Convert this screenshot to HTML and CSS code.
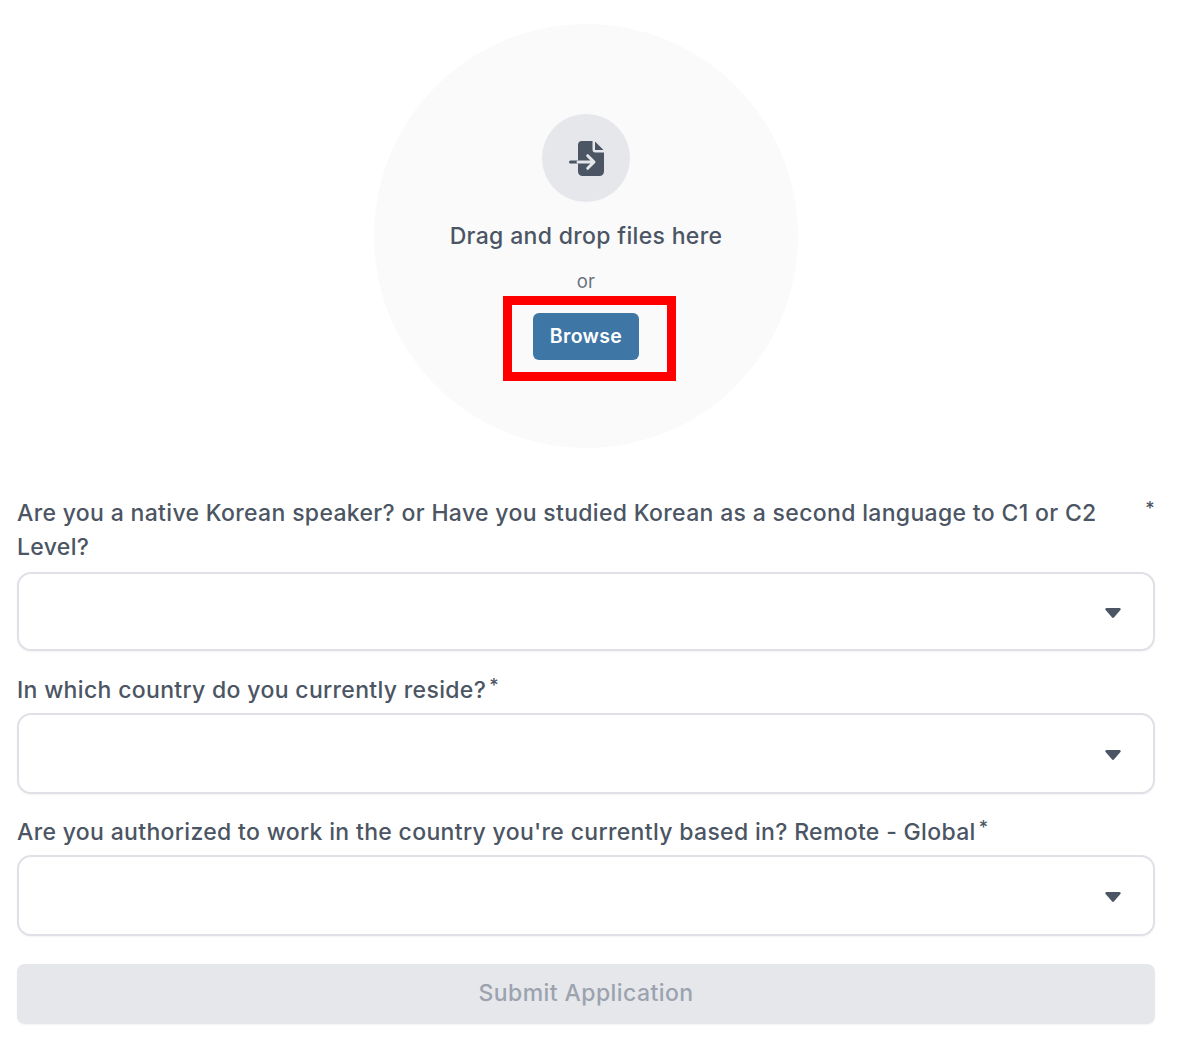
FILE: index.html
```html
<!DOCTYPE html>
<html lang="en">
<head>
<meta charset="utf-8">
<title>Application</title>
<link rel="stylesheet" href="styles.css">
</head>
<body>
<main class="page">
  <section class="drop">
    <div class="drop-icon">
      <svg width="38" height="38" viewBox="0 0 38 38" aria-hidden="true">
        <path class="file" d="M15 2h10.500v8.500a3 3 0 0 0 3 3H37v19a4.500 4.500 0 0 1-4.500 4.500H15.500a4.500 4.500 0 0 1-4.500-4.500V6a4 4 0 0 1 4-4z"/>
        <path class="file" d="M28 2.500l8.500 8.500H28z"/>
        <path class="arrow-out" d="M3.500 23H11"/>
        <path class="arrow-in" d="M11 23h15M20.700 16.700L27 23l-6.300 6.300"/>
      </svg>
    </div>
    <p class="drop-title">Drag and drop files here</p>
    <p class="drop-or">or</p>
    <div class="highlight"><button class="browse" type="button">Browse</button></div>
  </section>
  <form class="fields">
    <div class="field field-first">
      <label class="label"><span class="label-text">Are you a native Korean speaker? or Have you studied Korean as a second language to C1 or C2 Level?</span><span class="star">*</span></label>
      <div class="select select-first"><svg class="caret" width="16" height="10" viewBox="0 0 16 10"><path d="M1.500 0h13a1.200 1.200 0 0 1 .9 2L8.900 9.500a1.200 1.200 0 0 1-1.800 0L.6 2a1.200 1.200 0 0 1 .9-2z"/></svg></div>
    </div>
    <div class="field">
      <label class="label"><span class="label-text">In which country do you currently reside?</span><span class="star">*</span></label>
      <div class="select"><svg class="caret" width="16" height="10" viewBox="0 0 16 10"><path d="M1.500 0h13a1.200 1.200 0 0 1 .9 2L8.900 9.500a1.200 1.200 0 0 1-1.800 0L.6 2a1.200 1.200 0 0 1 .9-2z"/></svg></div>
    </div>
    <div class="field">
      <label class="label"><span class="label-text">Are you authorized to work in the country you're currently based in? Remote - Global</span><span class="star">*</span></label>
      <div class="select"><svg class="caret" width="16" height="10" viewBox="0 0 16 10"><path d="M1.500 0h13a1.200 1.200 0 0 1 .9 2L8.900 9.500a1.200 1.200 0 0 1-1.800 0L.6 2a1.200 1.200 0 0 1 .9-2z"/></svg></div>
    </div>
    <button class="submit" type="button">Submit Application</button>
  </form>
</main>
</body>
</html>
```
FILE: styles.css
```css
* { box-sizing: border-box; }
html, body { margin: 0; background: #fff; }
body { font-family: Inter, "Liberation Sans", sans-serif; color: #4b5563; }
.page { width: 1200px; height: 1058px; padding: 24px 45px 0 17px; }
.drop {
  width: 424px; height: 424px; margin: 0 auto; border-radius: 50%;
  background: #fafafb; display: flex; flex-direction: column; align-items: center;
  padding-top: 90px;
}
.drop-icon {
  width: 88px; height: 88px; border-radius: 50%; background: #e5e7eb;
  display: flex; align-items: center; justify-content: center;
}
.file { fill: #4b5563; }
.arrow-out { stroke: #4b5563; stroke-width: 3; stroke-linecap: round; fill: none; }
.arrow-in { stroke: #e5e7eb; stroke-width: 3; stroke-linecap: round; stroke-linejoin: round; fill: none; }
.drop-title { margin: 20px 0 0; font-size: 23px; line-height: 28px; font-weight: 500; letter-spacing: .33px; }
.drop-or { margin: 19px 0 0; font-size: 18.500px; line-height: 24px; letter-spacing: .33px; color: #6b7280; }
.highlight {
  width: 173px; height: 85px; margin: 3px 0 0 6px; border: 9px solid #fe0000;
  display: flex; justify-content: flex-start; padding: 8px 0 0 21px;
}
.browse {
  width: 106px; height: 47px; padding: 0 0 1px 1px; border: 0; border-radius: 6px;
  background: #3e76a6; color: #fff; font: 600 19.500px Inter, sans-serif; letter-spacing: .33px;
}
.fields { margin-top: 48px; display: flex; flex-direction: column; }
.field { display: flex; flex-direction: column; margin-bottom: 21px; }
.field-first { margin-bottom: 22px; }
.label {
  display: flex; font-size: 23px; line-height: 34px; font-weight: 500;
  letter-spacing: .33px; margin-bottom: 6px;
}
.field-first .label { margin-bottom: 8px; }
.label-text { display: block; }
.star { font-size: 18px; line-height: 25px; margin-left: 3px; }
.select {
  height: 81px; border: 2px solid #dfe1e7; border-radius: 14px; background: #fff;
  display: flex; align-items: center; justify-content: flex-end; padding: 3px 32px 0 0;
  box-shadow: 0 1px 2px rgba(0, 0, 0, .05);
}
.select-first { height: 79px; }
.caret { fill: #4b5563; }
.submit {
  height: 60px; margin-top: 7px; padding-bottom: 4px; border: 0; border-radius: 8px; background: #e5e7eb;
  color: #9ca3af; font: 500 23px Inter, sans-serif; letter-spacing: .42px;
  box-shadow: 0 1px 2px rgba(0, 0, 0, .05);
}
```
